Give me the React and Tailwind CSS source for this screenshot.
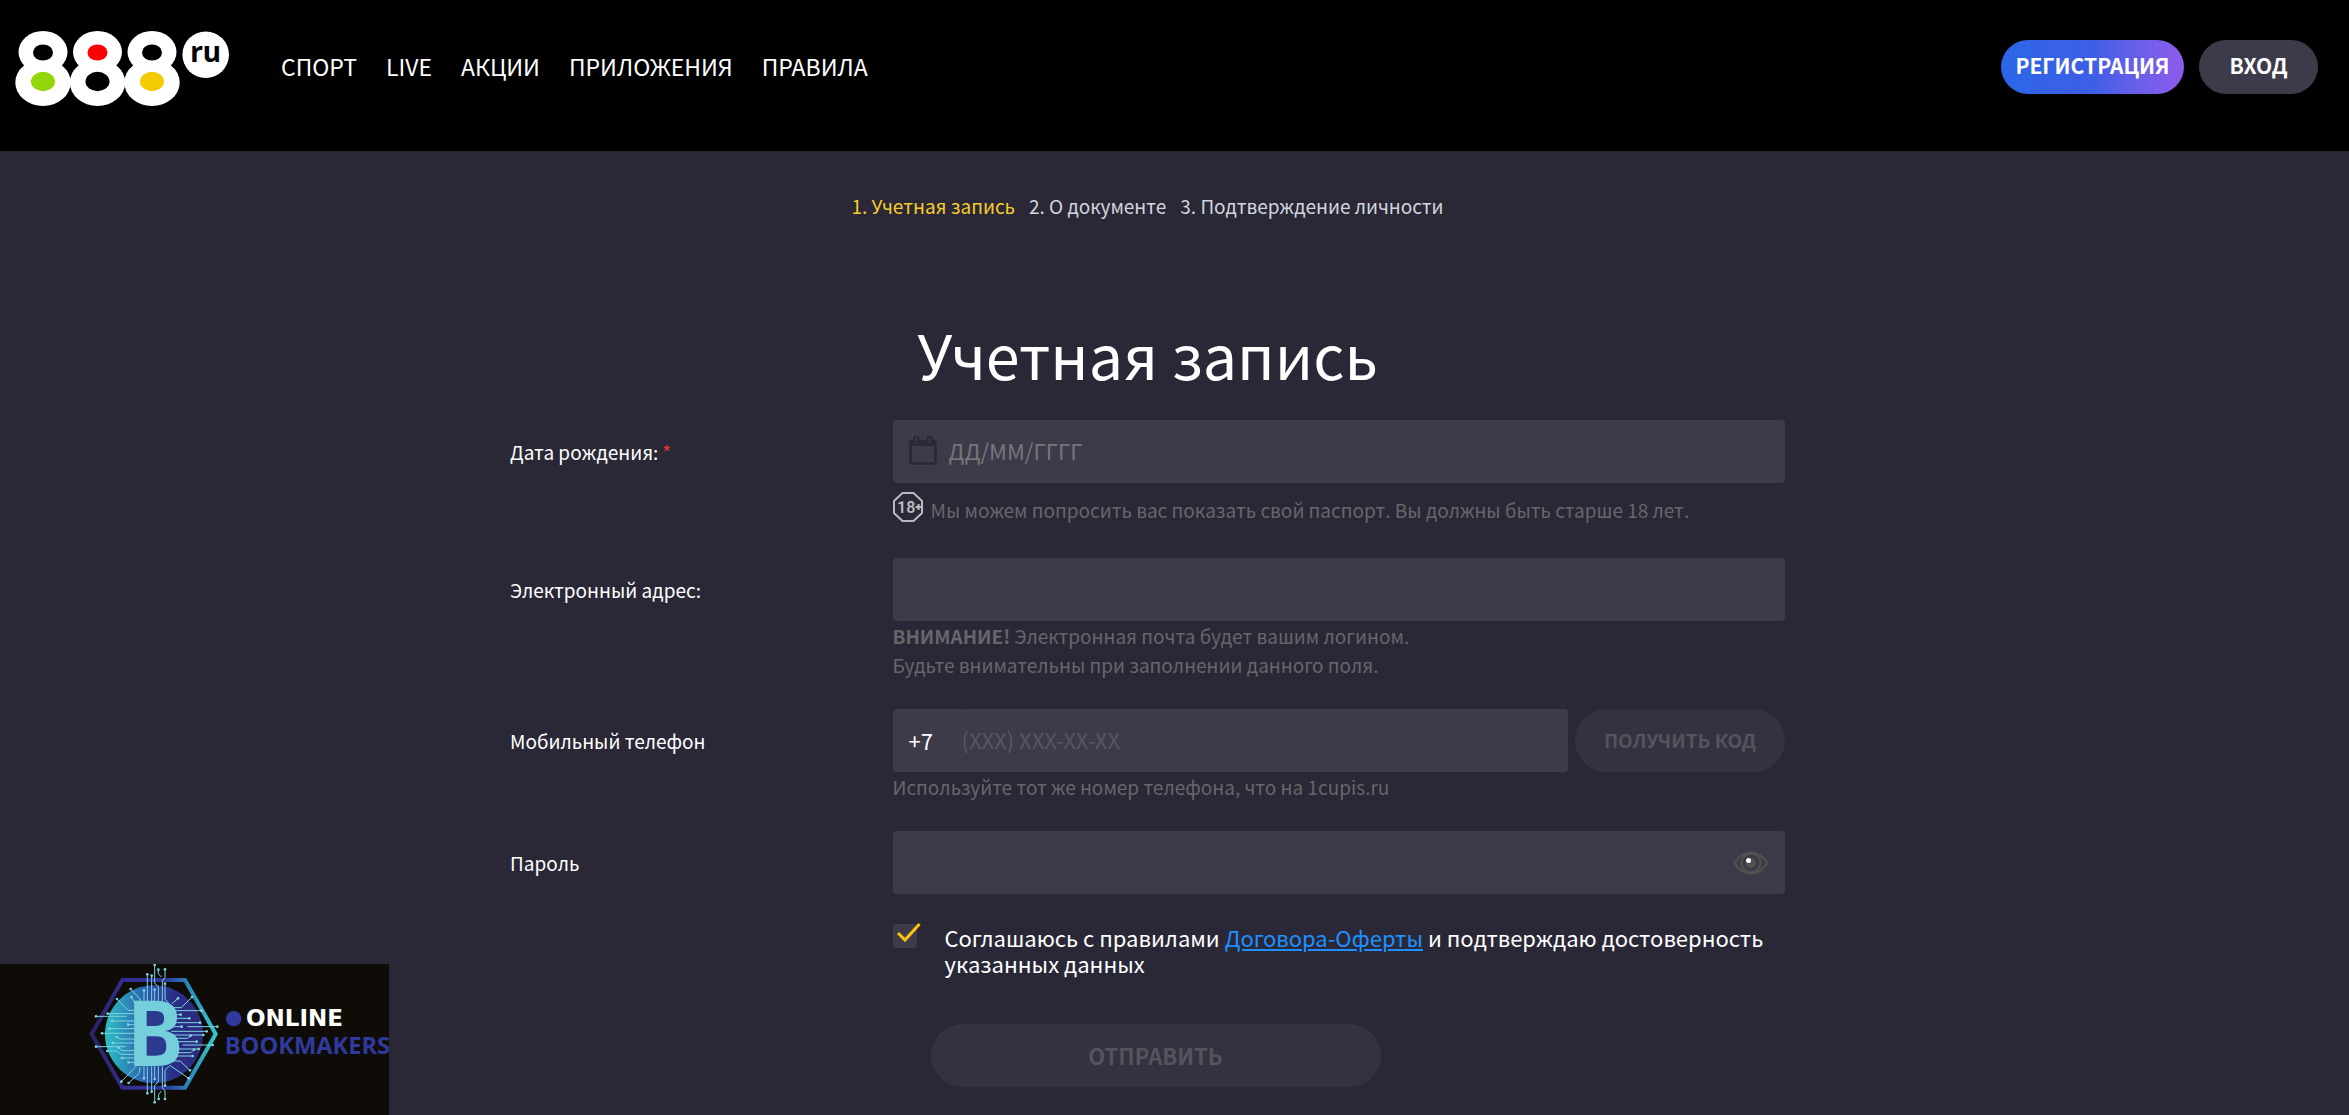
import React, { useState } from "react";

const navItems = ["СПОРТ", "LIVE", "АКЦИИ", "ПРИЛОЖЕНИЯ", "ПРАВИЛА"];

const steps = ["1. Учетная запись", "2. О документе", "3. Подтверждение личности"];

const inputClass =
  "block w-full h-[63px] rounded bg-[#3d3b4a] pb-1 text-[22px] text-white outline-none focus:ring-1 focus:ring-gray-500";

const hintClass = "text-[19px] leading-[29px] text-[#676669]";

const Logo = () => (
  <svg width="216" height="78" viewBox="14 30 216 78" role="img" aria-label="888.ru">
    {[43, 97.5, 152].map((x) => (
      <g key={x} fill="#fff">
        <ellipse cx={x} cy="52" rx="24.5" ry="21" />
        <ellipse cx={x} cy="82.5" rx="27.7" ry="23.5" />
      </g>
    ))}
    <ellipse cx="43" cy="52.5" rx="10" ry="8" fill="#000" />
    <ellipse cx="97.5" cy="52.5" rx="10" ry="8" fill="#ff0000" />
    <ellipse cx="152" cy="52.5" rx="10" ry="8" fill="#000" />
    <ellipse cx="43" cy="81.5" rx="12" ry="9.7" fill="#94d60a" />
    <ellipse cx="97.5" cy="81.5" rx="12" ry="9.7" fill="#000" />
    <ellipse cx="152" cy="81.5" rx="12" ry="9.7" fill="#f2cb05" />
    <circle cx="205.7" cy="54.7" r="23.3" fill="#fff" />
    <text x="205.5" y="62" textAnchor="middle" fontSize="28" fontWeight="700" fontFamily="Noto Sans, sans-serif" fill="#000">
      ru
    </text>
  </svg>
);

const CalendarIcon = () => (
  <svg width="28" height="29" viewBox="0 0 28 29" fill="none" stroke="#2a2837">
    <rect x="1.5" y="5" width="25" height="22.5" rx="2.5" strokeWidth="2.5" />
    <path d="M2 5h24v4.500H2z" fill="#2a2837" strokeWidth="1" />
    <path d="M5.500 8V2.500a2 2 0 0 1 4 0V8M18.500 8V2.500a2 2 0 0 1 4 0V8" strokeWidth="2" />
    <path d="M7.500 3v5M20.500 3v5" stroke="#3d3b4a" strokeWidth="1.500" />
  </svg>
);

const AgeIcon = () => (
  <svg width="30" height="30" viewBox="0 0 30 30" className="shrink-0">
    <path d="M9.500 1h11L29 9v12l-8.500 8h-11L1 21V9z" fill="none" stroke="#b9b9bd" strokeWidth="2" />
    <text x="4" y="21" fontSize="16" fontWeight="600" fontFamily="Roboto, sans-serif" fill="#b9b9bd">
      18
    </text>
    <path d="M25.500 12v6M22.500 15h6" stroke="#b9b9bd" strokeWidth="2.200" />
  </svg>
);

const EyeIcon = () => (
  <svg width="36" height="24" viewBox="0 0 36 24" fill="none" stroke="#53524f" strokeWidth="2">
    <path d="M1.500 12C6 5 11.500 1.500 18 1.500S30 5 34.500 12C30 19 24.500 22.500 18 22.500S6 19 1.500 12z" />
    <circle cx="18" cy="12" r="9.500" />
    <circle cx="18" cy="12" r="5" fill="#53524f" stroke="none" />
    <circle cx="15.500" cy="9.500" r="2.500" fill="#fff" stroke="none" />
  </svg>
);

// circuit traces around the coin, each one ends in a small pad
const traces = [
  [[442, 140], [442, 58]],
  [[455, 140], [455, 62]],
  [[475, 140], [475, 96], [464, 84], [464, 30]],
  [[487, 140], [487, 78], [495, 68], [495, 43]],
  [[484, 66], [475, 56], [475, 44]],
  [[507, 146], [495, 132], [495, 86]],
  [[432, 140], [432, 106]],
  [[464, 140], [464, 104]],
  [[420, 140], [420, 132], [392, 102]],
  [[410, 154], [394, 126]],
  [[408, 166], [384, 166], [351, 132]],
  [[408, 176], [323, 176]],
  [[380, 184], [288, 184]],
  [[408, 198], [336, 198]],
  [[408, 209], [384, 209]],
  [[408, 221], [328, 221]],
  [[408, 235], [306, 235]],
  [[408, 252], [360, 252], [350, 246]],
  [[408, 264], [338, 264]],
  [[378, 275], [288, 275]],
  [[408, 287], [366, 287], [356, 278]],
  [[408, 298], [364, 298], [350, 288], [322, 288]],
  [[408, 309], [366, 309]],
  [[408, 322], [386, 322]],
  [[408, 334], [364, 380]],
  [[420, 336], [418, 354], [386, 384]],
  [[432, 334], [432, 370]],
  [[442, 334], [442, 415]],
  [[455, 334], [455, 410]],
  [[475, 334], [475, 380], [464, 392], [464, 442]],
  [[487, 334], [487, 398], [495, 408], [495, 432]],
  [[484, 408], [476, 418], [476, 432]],
  [[507, 334], [495, 346], [495, 392]],
  [[464, 334], [464, 372]],
  [[508, 330], [566, 370]],
  [[518, 318], [540, 318], [570, 346]],
  [[516, 146], [534, 130]],
  [[518, 158], [544, 158], [576, 126]],
  [[524, 167], [604, 167]],
  [[524, 179], [542, 179]],
  [[522, 190], [568, 190]],
  [[520, 203], [600, 203]],
  [[516, 215], [545, 215]],
  [[562, 215], [652, 215]],
  [[514, 229], [620, 229]],
  [[522, 240], [610, 240]],
  [[528, 250], [562, 250], [572, 242]],
  [[530, 260], [590, 260]],
  [[548, 270], [638, 270]],
  [[530, 282], [596, 282]],
  [[530, 293], [572, 293], [582, 284]],
  [[528, 303], [578, 303]],
];

const BookmakersLogo = () => (
  <svg viewBox="0 27 1167 453" className="block w-full" role="img" aria-label="Online Bookmakers">
    <defs>
      <linearGradient id="hex" x1="0" y1="0" x2="1" y2="0">
        <stop offset="0" stopColor="#2a2368" />
        <stop offset="0.300" stopColor="#312f92" />
        <stop offset="0.600" stopColor="#2f3a9c" />
        <stop offset="0.800" stopColor="#2b8fbd" />
        <stop offset="1" stopColor="#30c8cc" />
      </linearGradient>
      <linearGradient id="coin" x1="0" y1="0" x2="1" y2="0">
        <stop offset="0" stopColor="#2cc0c8" />
        <stop offset="0.450" stopColor="#2b57a8" />
        <stop offset="0.700" stopColor="#2a2e86" />
        <stop offset="1" stopColor="#2c2a7c" />
      </linearGradient>
    </defs>
    <path d="M275 237 367 75H555L647 237 555 398H367Z" fill="none" stroke="url(#hex)" strokeWidth="12" />
    <circle cx="462" cy="238" r="147" fill="url(#coin)" />
    {traces.map((points) => {
      const [x, y] = points[points.length - 1];
      return (
        <g key={`${x}-${y}`}>
          <polyline points={points.join(" ")} fill="none" stroke="#7fd3df" strokeWidth="3" />
          <circle cx={x} cy={y} r="4" fill="#7fd3df" />
        </g>
      );
    })}
    <path d="M428 155h70v160h-70z" fill="#2a3a8e" />
    <text x="386" y="334" fontSize="268" fontWeight="700" fontFamily="DejaVu Sans Mono, monospace" fill="#74cfdb">
      B
    </text>
    <circle cx="701" cy="191" r="23" fill="#2f3a9c" />
    <text x="738" y="214" fontSize="69" fontWeight="700" fontFamily="DejaVu Sans, sans-serif" fill="#fff">
      ONLINE
    </text>
    <text x="674" y="297" fontSize="71" fontWeight="700" fontFamily="Open Sans, sans-serif" fill="#2f3a9c">
      BOOKMAKERS
    </text>
  </svg>
);

const Header = () => (
  <header className="flex h-[151px] items-start justify-between bg-black pl-3 pr-[31px]">
    <div className="flex items-start">
      <a href="#" className="mt-[30px] ml-0.5">
        <Logo />
      </a>
      <nav className="ml-[51px] mt-[50px]">
        <ul className="flex gap-[29px] text-[23px] leading-8">
          {navItems.map((item) => (
            <li key={item}><a href="#" className="hover:text-gray-300">{item}</a></li>
          ))}
        </ul>
      </nav>
    </div>
    <div className="mt-10 flex gap-[15px] text-[21px] font-bold">
      <button className="h-[54px] w-[183px] rounded-full bg-linear-to-r from-[#2b66e8] via-[#3d5ee6] to-[#8d5cec] pb-0.5 whitespace-nowrap">
        РЕГИСТРАЦИЯ
      </button>
      <button className="h-[54px] w-[119px] rounded-full bg-[#3d3b4a] pb-0.5">ВХОД</button>
    </div>
  </header>
);

const FormRow = ({ id, label, required, children }) => (
  <div className="grid grid-cols-[3fr_7fr]">
    <label htmlFor={id} className="flex h-[63px] items-center gap-1 pt-0.5 text-[19px]">
      {label}
      {required && <span className="text-[#e0392b]">*</span>}
    </label>
    <div>{children}</div>
  </div>
);

const App = () => {
  const [showPassword, setShowPassword] = useState(false);
  const [agreed, setAgreed] = useState(true);

  return (
    <div className="min-h-screen bg-[#2a2837] font-['Noto_Sans_CJK_SC',sans-serif] text-white">
      <Header />

      <main className="pt-10 pr-[54px] pb-7">
        <div className="mx-auto max-w-[1275px]">
          <ol className="flex justify-center gap-[14px] text-[19px] leading-[30px] text-gray-300">
            {steps.map((step, i) => (
              <li key={step} className={i === 0 ? "text-[#f7cb2d]" : ""}>{step}</li>
            ))}
          </ol>

          <h1 className="mt-[92px] mb-[26px] text-center text-[61px] leading-[81px]">Учетная запись</h1>

          <form className="flex flex-col gap-[30px]" onSubmit={(e) => e.preventDefault()}>
            <FormRow id="birth" label="Дата рождения:" required>
              <div className="relative">
                <span className="absolute top-4 left-4"><CalendarIcon /></span>
                <input id="birth" type="text" placeholder="ДД/ММ/ГГГГ" className={`${inputClass} pl-14 pr-4 placeholder:text-[#777679]`} />
              </div>
              <div className="flex items-end gap-2 pt-[9px] pb-1">
                <div className="pb-0.5"><AgeIcon /></div>
                <p className={hintClass}>
                  Мы можем попросить вас показать свой паспорт. Вы должны быть старше 18 лет.
                </p>
              </div>
            </FormRow>

            <FormRow id="email" label="Электронный адрес:">
              <input id="email" type="email" className={`${inputClass} px-4`} />
              <p className={hintClass}>
                <b>ВНИМАНИЕ!</b> Электронная почта будет вашим логином.
                <br />
                Будьте внимательны при заполнении данного поля.
              </p>
            </FormRow>

            <FormRow id="phone" label="Мобильный телефон">
              <div className="flex gap-[7px]">
                <div className="flex flex-1 items-center rounded bg-[#3d3b4a] pl-4">
                  <label htmlFor="phone" className="w-[53px] text-[22px]">+7</label>
                  <input id="phone" type="tel" placeholder="(XXX) XXX-XX-XX" className={`${inputClass} flex-1 placeholder:text-[#575561]`} />
                </div>
                <button type="button" disabled className="h-[63px] w-[210px] rounded-full bg-[#343240] text-[19px] font-bold text-[#55535d]">
                  ПОЛУЧИТЬ КОД
                </button>
              </div>
              <p className={hintClass}>Используйте тот же номер телефона, что на 1cupis.ru</p>
            </FormRow>

            <FormRow id="password" label="Пароль">
              <div className="relative">
                <input id="password" type={showPassword ? "text" : "password"} className={`${inputClass} pl-4 pr-16`} />
                <button
                  type="button"
                  aria-label="Показать пароль"
                  className="absolute top-5 right-4"
                  onClick={() => setShowPassword(!showPassword)}
                >
                  <EyeIcon />
                </button>
              </div>
            </FormRow>

            <div className="grid grid-cols-[3fr_7fr]">
              <div className="col-start-2 flex items-start gap-7">
                <span className="relative h-6 w-6 shrink-0">
                  <input
                    id="agree"
                    type="checkbox"
                    checked={agreed}
                    onChange={(e) => setAgreed(e.target.checked)}
                    className="block h-6 w-6 appearance-none rounded bg-[#3d3b4a]"
                  />
                  {agreed && (
                    <svg width="28" height="24" viewBox="0 0 28 24" className="pointer-events-none absolute -top-1 left-0">
                      <path d="M5 13l7 7L26.500 4" fill="none" stroke="#fdc010" strokeWidth="3" />
                    </svg>
                  )}
                </span>
                <label htmlFor="agree" className="text-[22px] leading-[26px]">
                  Соглашаюсь с правилами{" "}
                  <a href="#" className="text-[#1e90ff] underline">Договора-Оферты</a> и подтверждаю достоверность указанных данных
                </label>
              </div>
            </div>

            <div className="mt-[18px] flex justify-center pl-4">
              <button type="submit" disabled className="h-[63px] w-[450px] rounded-full bg-[#343240] text-[22px] font-bold text-[#55535d]">
                ОТПРАВИТЬ
              </button>
            </div>
          </form>
        </div>
      </main>

      <aside className="fixed bottom-0 left-0 w-[389px] bg-[#0f0c08]">
        <BookmakersLogo />
      </aside>
    </div>
  );
};

export default App;
